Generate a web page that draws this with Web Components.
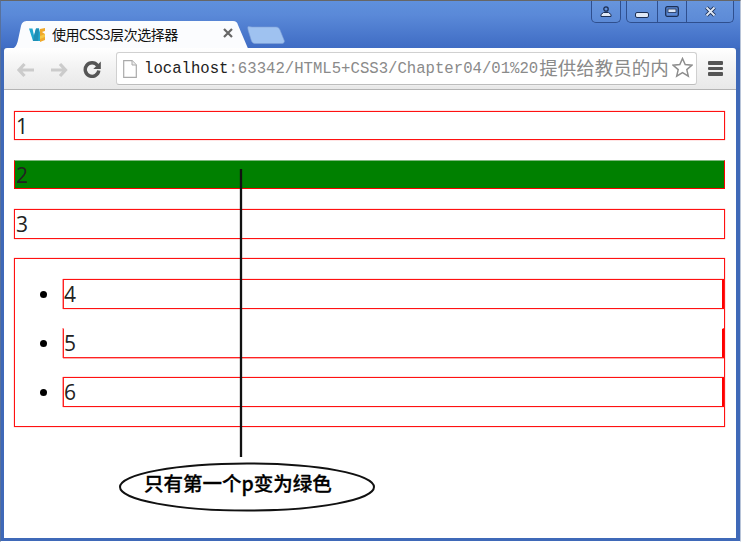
<!DOCTYPE html>
<html><head><meta charset="utf-8"><style>html,body{margin:0;padding:0;background:#fff}</style></head><body>
<browser-window>
  <span slot="title">使用CSS3层次选择器</span>
  <demo-box>1</demo-box>
  <demo-box green>2</demo-box>
  <demo-box>3</demo-box>
  <demo-list>
    <demo-item>4</demo-item>
    <demo-item notop>5</demo-item>
    <demo-item>6</demo-item>
  </demo-list>
  <call-out>只有第一个p变为绿色</call-out>
</browser-window>
<script>
function def(name, css, html){
  customElements.define(name, class extends HTMLElement{
    constructor(){super();this.attachShadow({mode:'open'}).innerHTML='<style>'+css+'</style>'+html;}
  });
}
const sym='"Liberation Sans","Noto Sans CJK SC",sans-serif';
def('browser-window',`
:host{display:flex;flex-direction:column;width:741px;height:542px;box-sizing:border-box;position:relative;overflow:hidden;background:#3f69b8;font-family:${sym};border-top:1px solid #666;border-left:1px solid #58719c;border-right:1px solid #b8c4d8;border-bottom:1px solid #fff}
.top{height:47px;flex:none;position:relative;background:linear-gradient(#5f90dd,#5a89d8 30%,#3f6cc4);display:flex;justify-content:flex-end}
.tabs{position:absolute;left:8px;top:19px;width:290px;height:29px}
.tabtxt{position:absolute;left:51px;top:24px;font:14px "Noto Sans CJK SC",sans-serif;line-height:18px;color:#111;letter-spacing:-.45px}
.fav{position:absolute;left:28px;top:26px}
.x{position:absolute;left:221px;top:26px}
.btns{display:flex;align-items:flex-start;gap:5px;margin-right:6px}
.grp{display:flex;height:21px;border:1px solid #2f4f8e;border-top:0;border-radius:0 0 5px 5px;background:linear-gradient(#6795dd,#5c8ad6)}
.grp>span{display:flex;align-items:center;justify-content:center;border-left:1px solid #2f4f8e}
.grp>span:first-child{border-left:0}
.tool{height:42px;flex:none;margin:0 4px 0 3px;background:linear-gradient(#fff,#f2f2f2 50%,#e8e8e8);border-radius:3px 3px 0 0;border-bottom:1px solid #b4b4b4;box-sizing:border-box;display:flex;align-items:center;padding-left:11px}
.nav{display:flex;align-items:center;gap:13px;width:101px;flex:none}
.nav svg{margin-top:2px}
.nav svg:nth-child(2){margin-left:1px}
.nav svg:nth-child(3){margin:0 0 0 1px}
.omni{box-sizing:border-box;width:581px;height:33px;background:#fff;border:1px solid #d0d0d0;border-bottom-color:#bdbdbd;border-radius:3px;display:flex;align-items:center;padding-left:6px;position:relative;overflow:hidden;box-shadow:0 1px 0 #eee}
.url{margin-left:7px;font:15.650px "Liberation Mono",monospace;color:#8a8a8a;white-space:nowrap;line-height:24px;display:flex;align-items:center}
.url b{font-weight:400;color:#222}
.url i{font:400 18.500px "Noto Sans CJK SC",sans-serif;color:#8a8a8a;line-height:24px;margin:-3px 0 0 1px}
.star{position:absolute;right:3px;top:4px;background:#fff}
.menu{margin-left:11px;display:flex;flex-direction:column;gap:2px}
.menu span{display:block;width:15px;height:3.500px;background:#555;border-radius:1px}
.page{flex:1;background:#fff;margin:0 4px 3px 3px;box-sizing:border-box;padding:20.500px 11px 0 10px;position:relative;min-height:0}
`,`
<div class="top">
  <svg class="tabs" viewBox="0 0 290 29" width="290" height="29">
    <path d="M3 28.500C6 28 8 25 9 20L12 6C13 2 15 1 19 1H224C227 1 228 2 229 5L239 28.500Z" fill="#fff" fill-opacity=".98"/>
    <path d="M239 6.500C238.500 8 239 10 240 13L242.500 21C243.500 23 244.500 23.500 247 23.500H272C275 23.500 276 22 275 20L271 10C270 8 269 7 267 7H243Z" fill="#9fc2f0" stroke="#7f9fd6" stroke-width=".6"/>
  </svg>
  <svg class="fav" width="17" height="16" viewBox="0 0 17 16">
    <path d="M0 1.500h3.500l1.500 7 2-7h3l1 4V14H4z" fill="#21a7cf"/>
    <path d="M5 9l2-7.500 3 0L9 14H4z" fill="#1e8fb6"/>
    <path d="M11 2l5-1v3l-3 1 3 2v6l-5 2z" fill="#f0a92a"/>
    <path d="M11 9l5-2v3l-5 2z" fill="#f6c845"/>
  </svg>
  <span class="tabtxt"><slot name="title"></slot></span>
  <svg class="x" width="12" height="12" viewBox="0 0 12 12"><path d="M2 2l8 8M10 2l-8 8" stroke="#666" stroke-width="2.200"/></svg>
  <div class="btns">
    <div class="grp" style="width:28px"><span style="flex:1">
      <svg width="12" height="11" viewBox="0 0 12 11"><circle cx="6" cy="3" r="2.200" fill="none" stroke="#1c2f55" stroke-width="1.300"/><path d="M1 10.500V8.500L3.500 6.500h5l2.500 2v2z" fill="#dfe8f6" stroke="#1c2f55"/></svg>
    </span></div>
    <div class="grp" style="width:106px">
      <span style="width:30px"><svg width="14" height="6" viewBox="0 0 14 6" style="margin-top:7px"><rect x=".5" y=".5" width="13" height="5" rx="1.500" fill="#dfe8f6" stroke="#1c2f55"/></svg></span>
      <span style="width:28px"><svg width="14" height="11" viewBox="0 0 14 11"><rect x=".7" y=".7" width="12.600" height="9.600" rx="1.500" fill="#5c8ad6" stroke="#1c2f55" stroke-width="1.300"/><rect x="3" y="3" width="8" height="3.500" fill="#dfe8f6" stroke="#1c2f55" stroke-width=".8"/></svg></span>
      <span style="flex:1"><svg width="13" height="11" viewBox="0 0 13 11"><path d="M2.500 1.500l8 8M10.500 1.500l-8 8" stroke="#1c2f55" stroke-width="3.800"/><path d="M2.500 1.500l8 8M10.500 1.500l-8 8" stroke="#dfe8f6" stroke-width="1.800"/></svg></span>
    </div>
  </div>
</div>
<div class="tool">
  <div class="nav">
    <svg width="20" height="16" viewBox="0 0 20 16"><path d="M9.500 2L4 8l5.500 6M4.500 8H19" fill="none" stroke="#cbcbcb" stroke-width="3.200"/></svg>
    <svg width="20" height="16" viewBox="0 0 20 16"><path d="M11 2l5.500 6-5.500 6M16 8H2" fill="none" stroke="#cbcbcb" stroke-width="3.200"/></svg>
    <svg width="18" height="18" viewBox="0 0 18 18"><path d="M14.500 5.500A6.800 6.800 0 1 0 15.800 10.500" fill="none" stroke="#555" stroke-width="3.400"/><path d="M17.800 1.500v7.500h-7.500z" fill="#555"/></svg>
  </div>
  <div class="omni">
    <svg width="14" height="18" viewBox="0 0 14 18"><path d="M.7.700H9L13.300 5v12.300H.7z" fill="#fff" stroke="#aaa" stroke-width="1.200"/><path d="M9 .7V5h4.300" fill="#eee" stroke="#aaa"/></svg>
    <span class="url"><b>localhost</b>:63342/HTML5+CSS3/Chapter04/01%20<i>提供给教员的内</i></span>
    <svg class="star" width="21" height="21" viewBox="0 0 21 21"><path d="M10.500 1.500l2.700 6.100 6.600.6-5 4.400 1.500 6.500-5.800-3.400-5.800 3.400 1.500-6.500-5-4.400 6.600-.6z" fill="#fff" stroke="#8e8e8e" stroke-width="1.500"/></svg>
  </div>
  <div class="menu"><span></span><span></span><span></span></div>
</div>
<div class="page"><slot></slot></div>
`);
const boxCss=`box-sizing:border-box;height:29.500px;border:1px solid #f11;box-shadow:0 0 1px #f66;font:21px/29px "Open Sans",sans-serif;color:#222;padding-left:1px;`;
def('demo-box',`:host{display:block;${boxCss}margin-bottom:19.800px}:host([green]){background:#008000;border-color:#f00;border-top-color:#7cb87c;box-shadow:none}`,'<slot></slot>');
def('demo-list',`:host{display:flex;flex-direction:column;box-sizing:border-box;height:169px;border:1px solid #f11;box-shadow:0 0 1px #f66;padding:20px 0 0 25px;gap:19.500px}`,'<slot></slot>');
def('demo-item',`:host{display:flex;align-items:center}
.dot{width:7px;height:7px;border-radius:50%;background:#000;margin-right:16px;flex:none}
.b{flex:1;${boxCss}border-right:2px solid #f00;padding-left:0;border-left-color:#f22;box-shadow:0 0 1px #f66,-1px 0 0 rgba(255,70,70,.45)}
:host([notop]) .b{border-top-color:transparent;border-bottom-color:#f22;box-shadow:0 1px 0 rgba(255,70,70,.45),-1px 0 0 rgba(255,70,70,.45)}`,'<span class="dot"></span><div class="b"><slot></slot></div>');
def('call-out',`:host{position:absolute;left:0;top:0;width:100%;height:100%;pointer-events:none}
svg{position:absolute;left:-4px;top:-90px}
.t{position:absolute;left:140px;top:380px;font:500 19.500px/26px "Noto Sans CJK SC",sans-serif;color:#000;white-space:nowrap;-webkit-text-stroke:.3px #000}`,
`<svg width="741" height="542" viewBox="0 0 741 542"><path d="M241 169V457" stroke="#111" stroke-width="2.300"/><ellipse cx="247" cy="487" rx="127" ry="23.500" fill="#fff" stroke="#111" stroke-width="2"/></svg><span class="t"><slot></slot></span>`);
</script>
</body></html>
